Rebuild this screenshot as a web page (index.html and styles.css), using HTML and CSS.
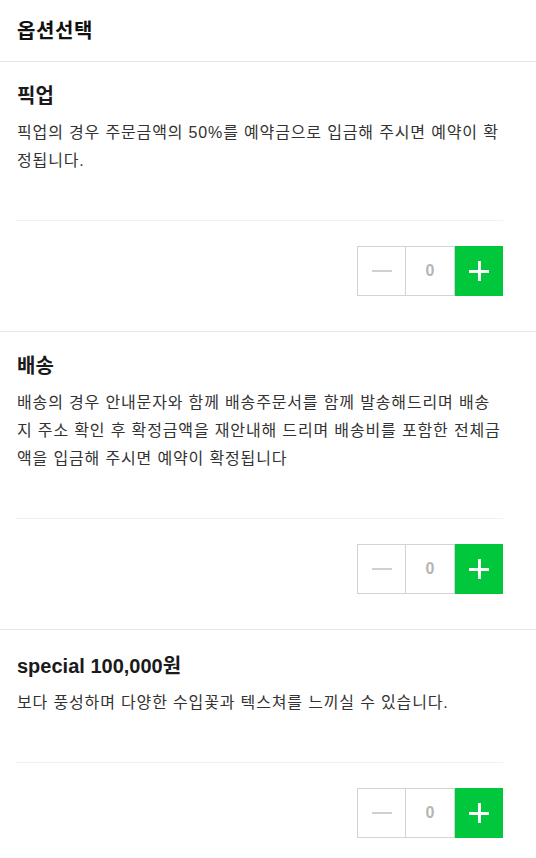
FILE: index.html
```html
<!DOCTYPE html>
<html lang="ko">
<head>
<meta charset="utf-8">
<link rel="stylesheet" href="styles.css">
</head>
<body>
<div class="page">
  <header class="head"><h1 class="head-title">옵션선택</h1></header>

  <section class="opt">
    <h2 class="opt-title">픽업</h2>
    <p class="opt-desc">픽업의 경우 주문금액의 50%를 예약금으로 입금해 주시면 예약이 확정됩니다.</p>
    <div class="opt-line"></div>
    <div class="opt-foot">
      <div class="stepper">
        <button class="st-btn st-minus" aria-label="빼기"><span class="bar"></span></button>
        <span class="st-val">0</span>
        <button class="st-btn st-plus" aria-label="더하기"><span class="bar"></span><span class="bar v"></span></button>
      </div>
    </div>
  </section>

  <section class="opt">
    <h2 class="opt-title">배송</h2>
    <p class="opt-desc">배송의 경우 안내문자와 함께 배송주문서를 함께 발송해드리며 배송지 주소 확인 후 확정금액을 재안내해 드리며 배송비를 포함한 전체금액을 입금해 주시면 예약이 확정됩니다</p>
    <div class="opt-line"></div>
    <div class="opt-foot">
      <div class="stepper">
        <button class="st-btn st-minus" aria-label="빼기"><span class="bar"></span></button>
        <span class="st-val">0</span>
        <button class="st-btn st-plus" aria-label="더하기"><span class="bar"></span><span class="bar v"></span></button>
      </div>
    </div>
  </section>

  <section class="opt opt-last">
    <h2 class="opt-title">special 100,000원</h2>
    <p class="opt-desc">보다 풍성하며 다양한 수입꽃과 텍스쳐를 느끼실 수 있습니다.</p>
    <div class="opt-line"></div>
    <div class="opt-foot">
      <div class="stepper">
        <button class="st-btn st-minus" aria-label="빼기"><span class="bar"></span></button>
        <span class="st-val">0</span>
        <button class="st-btn st-plus" aria-label="더하기"><span class="bar"></span><span class="bar v"></span></button>
      </div>
    </div>
  </section>
</div>
</body>
</html>
```

FILE: styles.css
```css
* { box-sizing: border-box; }
html, body { margin: 0; padding: 0; background: #fff; }
body {
  font-family: "Liberation Sans", "Noto Sans CJK KR", sans-serif;
  color: #222;
}
.page { width: 536px; }

.head {
  height: 62px;
  border-bottom: 1px solid #e4e4e4;
  padding: 0 16px;
  display: flex;
  align-items: center;
}
.head-title {
  margin: 0;
  font-size: 20px;
  font-weight: bold;
  color: #111;
  line-height: 28px;
  padding-left: 1px;
  letter-spacing: 0.6px;
}

.opt {
  padding: 20px 33px 35px 16px;
  border-bottom: 1px solid #e8e8e8;
}
.opt-last { padding-top: 22px; }
.opt-title {
  margin: 0;
  font-size: 20px;
  font-weight: bold;
  line-height: 28px;
  color: #1a1a1a;
  padding-left: 1px;
}
.opt-desc {
  margin: 9px 0 45px;
  font-size: 16px;
  line-height: 28px;
  letter-spacing: 0.85px;
  color: #333;
  padding-left: 1px;
}
.opt-line {
  height: 1px;
  background: #f1f1f1;
}
.opt-foot {
  display: flex;
  justify-content: flex-end;
  padding-top: 25px;
}

.stepper {
  display: flex;
  height: 50px;
}
.st-btn {
  margin: 0;
  padding: 0;
  font: inherit;
  position: relative;
  cursor: pointer;
}
.st-minus {
  width: 48px;
  background: #fff;
  border: 1px solid #d3d3d3;
  border-right: 0;
}
.st-val {
  width: 50px;
  border: 1px solid #d3d3d3;
  display: flex;
  align-items: center;
  justify-content: center;
  font-size: 16px;
  font-weight: bold;
  color: #b5b5b5;
}
.st-plus {
  width: 48px;
  background: #00c73c;
  border: 0;
}
.bar {
  position: absolute;
  left: 50%;
  top: 50%;
  width: 20px;
  height: 2px;
  margin: -1px 0 0 -10px;
  background: #d0d0d0;
}
.st-plus .bar {
  background: #fff;
  width: 20px;
  height: 3px;
  margin: -1.5px 0 0 -10px;
}
.st-plus .bar.v {
  width: 3px;
  height: 20px;
  margin: -10px 0 0 -1.5px;
}
```
